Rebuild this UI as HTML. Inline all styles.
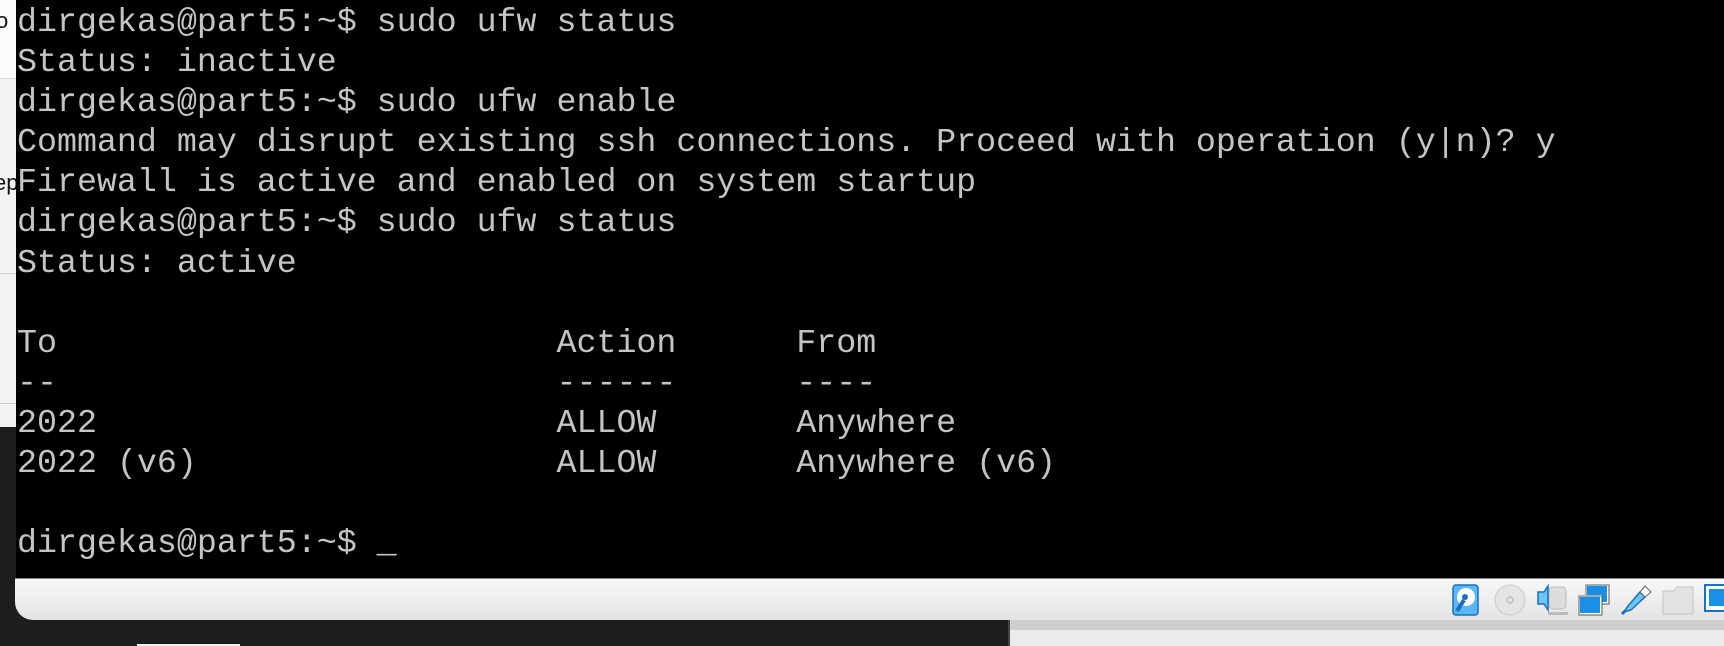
<!DOCTYPE html>
<html><head><meta charset="utf-8"><style>
html,body{margin:0;padding:0;width:1724px;height:646px;overflow:hidden;background:#1c1d1f;position:relative}
.left{position:absolute;left:0;top:0;width:16px;height:427px;background:#f2f2f2}
.left .w{position:absolute;left:0;top:0;width:16px;height:78px;background:#fbfbfb;border-bottom:1px solid #ddd}
.left .l1{position:absolute;left:0;top:273px;width:16px;height:1px;background:#ccc}
.left .l2{position:absolute;left:0;top:403px;width:16px;height:1px;background:#ccc}
.left span{position:absolute;font:22px "Liberation Sans",sans-serif;color:#111}
.term{position:absolute;left:16px;top:0;width:1708px;height:578px;background:#000}
pre{margin:0;position:absolute;left:1px;top:2px;font:33.3px/40.1px "Liberation Mono",monospace;color:#c4c4c4;letter-spacing:0}
.bar{position:absolute;left:15px;top:578px;width:1709px;height:42px;background:linear-gradient(#f8f8f8,#e4e4e4);border-top:1px solid #8a8a8a;box-sizing:border-box;border-bottom-left-radius:18px}
.rs{position:absolute;left:1008px;top:620px;width:716px;height:26px;background:#ececec;border-left:2px solid #444}
.rs div{height:10px;background:#cfcfcf}
svg{position:absolute}
</style></head><body>
<div class="left"><div class="w"></div><div class="l1"></div><div class="l2"></div>
<span style="left:-4px;top:8px">o</span><span style="left:-6px;top:170px">ep</span></div>
<div class="term"><pre>dirgekas@part5:~$ sudo ufw status
Status: inactive
dirgekas@part5:~$ sudo ufw enable
Command may disrupt existing ssh connections. Proceed with operation (y|n)? y
Firewall is active and enabled on system startup
dirgekas@part5:~$ sudo ufw status
Status: active

To                         Action      From
--                         ------      ----
2022                       ALLOW       Anywhere
2022 (v6)                  ALLOW       Anywhere (v6)

dirgekas@part5:~$ _</pre></div>
<div class="bar"></div>
<div class="rs"><div></div></div>
<div style="position:absolute;left:137px;top:644px;width:103px;height:2px;background:#eee"></div>
<svg style="left:1452px;top:584px" width="27" height="32" viewBox="0 0 27 32"><rect x="1" y="1" width="25" height="30" rx="3" fill="#5ab8f5" stroke="#1a6fc0" stroke-width="1.5"/><circle cx="14" cy="13" r="9" fill="#fff"/><circle cx="13" cy="13" r="3" fill="#1a6fc0"/><path d="M12 16 L5 27" stroke="#1a6fc0" stroke-width="4"/></svg>
<svg style="left:1494px;top:584px" width="32" height="32"><circle cx="16" cy="16" r="15" fill="#e4e4e4" stroke="#c8c8c8"/><circle cx="16" cy="16" r="3" fill="none" stroke="#bbb" stroke-width="1.5"/></svg>
<svg style="left:1536px;top:584px" width="33" height="32"><rect x="13" y="3" width="17" height="22" rx="4" fill="#ddd" stroke="#bbb"/><rect x="12" y="28" width="20" height="3" fill="#bbb"/><path d="M2 8 L8 8 L12 2 L12 26 L8 20 L2 20 Z" fill="#6cc6f8" stroke="#1a6fc0" stroke-width="1.5"/></svg>
<svg style="left:1578px;top:584px" width="32" height="32"><rect x="8" y="1" width="22" height="18" fill="#1a8fe8" stroke="#fff" stroke-width="2"/><rect x="8" y="1" width="23" height="19" fill="none" stroke="#555"/><rect x="1" y="12" width="22" height="18" fill="#1a8fe8" stroke="#fff" stroke-width="2"/><rect x="1" y="12" width="23" height="19" fill="none" stroke="#555"/></svg>
<svg style="left:1620px;top:584px" width="32" height="32"><path d="M4 28 L8 22 L20 8 L25 13 L11 26 Z" fill="#6cc6f8" stroke="#1a6fc0" stroke-width="1.5"/><path d="M20 8 L25 2 L31 8 L25 13 Z" fill="#fff" stroke="#666"/><path d="M2 30 L6 26" stroke="#1a6fc0" stroke-width="3"/></svg>
<svg style="left:1662px;top:585px" width="32" height="30"><path d="M1 6 L12 6 L15 2 L31 2 L31 29 L1 29 Z" fill="#e2e2e2" stroke="#c4c4c4"/></svg>
<svg style="left:1704px;top:584px" width="20" height="32"><rect x="1" y="1" width="30" height="26" fill="#fff" stroke="#1a6fc0" stroke-width="2"/><rect x="5" y="5" width="24" height="17" fill="#1a8fe8"/></svg>
</body></html>
